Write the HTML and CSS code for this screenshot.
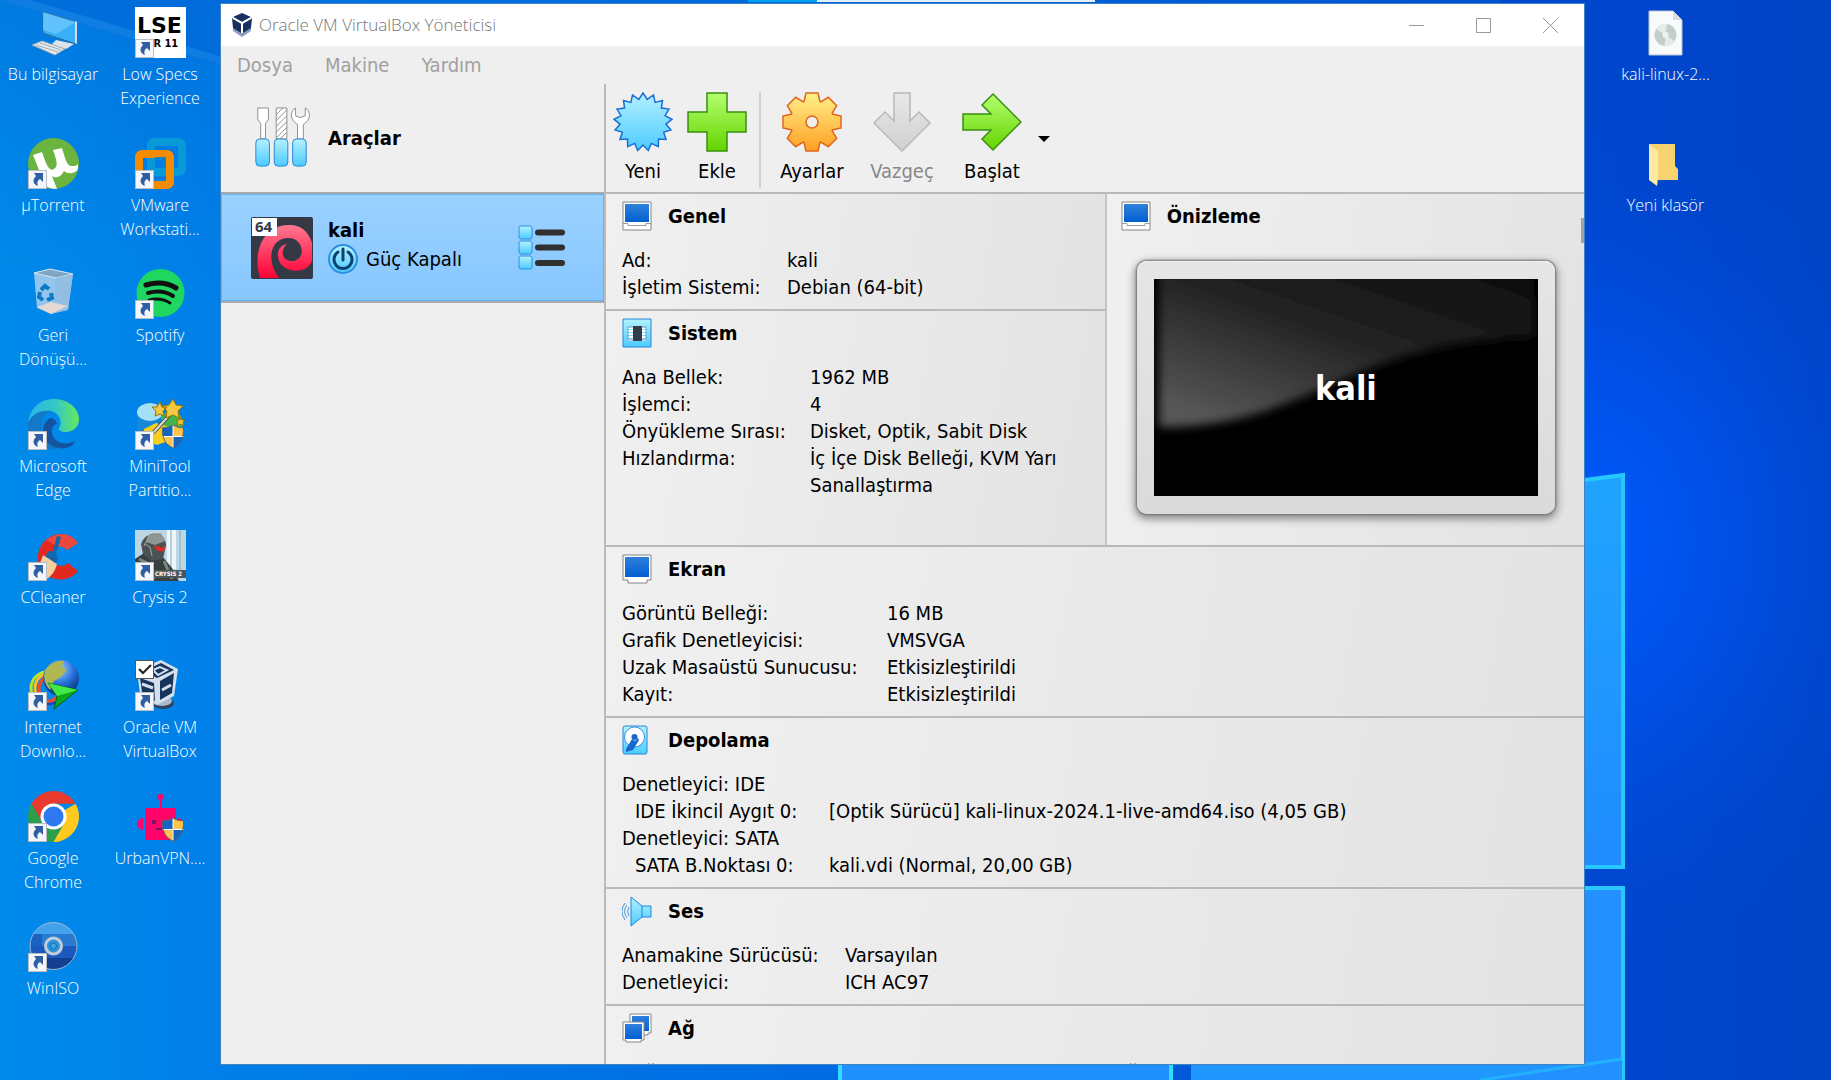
FILE: index.html
```html
<!DOCTYPE html>
<html lang="tr">
<head>
  <meta charset="UTF-8" />
  <meta name="viewport" content="width=device-width, initial-scale=1.0" />
  <title>Oracle VM VirtualBox Yöneticisi</title>
  <link rel="stylesheet" href="styles.css">
</head>
<body>
  <!-- shared gradients and symbols -->
  <svg class="defs" width="0" height="0" aria-hidden="true">
    <defs>
      <linearGradient id="aqua" x1="0" y1="0" x2="0" y2="1"><stop offset="0" stop-color="#b4f1ff"/><stop offset="1" stop-color="#4ccbff"/></linearGradient>
      <linearGradient id="green" x1="0" y1="0" x2="0" y2="1"><stop offset="0" stop-color="#b5ff6e"/><stop offset="1" stop-color="#63d400"/></linearGradient>
      <linearGradient id="orange" x1="0" y1="0" x2="0" y2="1"><stop offset="0" stop-color="#fff08a"/><stop offset="1" stop-color="#ffa024"/></linearGradient>
      <linearGradient id="silver" x1="0" y1="0" x2="0" y2="1"><stop offset="0" stop-color="#e8e8e8"/><stop offset="1" stop-color="#d0d0d0"/></linearGradient>
      <linearGradient id="screen" x1="0" y1="0" x2="0" y2="1"><stop offset="0" stop-color="#3080dc"/><stop offset="1" stop-color="#0060d0"/></linearGradient>
      <linearGradient id="red" x1="0" y1="0" x2="0" y2="1"><stop offset="0" stop-color="#ff7a90"/><stop offset="1" stop-color="#ff0036"/></linearGradient>
      <symbol id="shortcut" viewBox="0 0 19 19">
        <rect x=".5" y=".5" width="18" height="18" fill="#f4f6fa" stroke="#b9bec6"/>
        <path d="M6 3h9v9l-3-3c-3 2-3 4-2 7-5-2-6-6-2-10z" fill="#2f5ea5"/>
      </symbol>
      <symbol id="shield" viewBox="0 0 24 26">
        <path d="M12 1c3 2 7 3 11 3 0 10-2 17-11 21C3 21 1 14 1 4c4 0 8-1 11-3z" fill="#ffc24a"/>
        <path d="M12 1v12H1C1 10 1 7 1 4c4 0 8-1 11-3zM12 13h10c-1 6-4 10-10 12z" fill="#1565c0"/>
        <path d="M12 1v24M1 13h22" stroke="#fff"/>
        <path d="M12 1c3 2 7 3 11 3 0 10-2 17-11 21C3 21 1 14 1 4c4 0 8-1 11-3z" fill="none" stroke="#56606c"/>
      </symbol>
      <symbol id="pc" viewBox="0 0 31 31">
        <path d="M1 1h28v28H1z" fill="#fff" stroke="#858585"/>
        <path d="M3 3h24v18H3z" fill="url(#screen)"/>
        <path d="M1 22.500h5v2h18v-2h5" fill="none" stroke="#999"/>
      </symbol>
    </defs>
  </svg>

  <svg class="wallpaper" viewBox="0 0 1831 1080" preserveAspectRatio="none" aria-hidden="true">
    <defs>
      <linearGradient id="sky"><stop offset="0" stop-color="#008bea"/><stop offset=".12" stop-color="#007fe8"/><stop offset=".4" stop-color="#006fe4"/><stop offset=".84" stop-color="#0047d0"/><stop offset="1" stop-color="#0044c6"/></linearGradient>
      <radialGradient id="glow" cx=".86" cy=".5" r=".4" gradientTransform="translate(.43 0) scale(.5 1)"><stop offset="0" stop-color="#005cff"/><stop offset=".4" stop-color="#0052ee" stop-opacity=".8"/><stop offset="1" stop-color="#0048d0" stop-opacity="0"/></radialGradient>
      <linearGradient id="topdark" x1="0" y1="0" x2="0" y2="1"><stop offset="0" stop-color="#0060d0" stop-opacity=".35"/><stop offset="1" stop-color="#0060d0" stop-opacity="0"/></linearGradient>
      <linearGradient id="pane" x1="0" y1="0" x2="0" y2="1"><stop offset="0" stop-color="#20a4ff"/><stop offset="1" stop-color="#208cff"/></linearGradient>
    </defs>
    <rect width="1831" height="1080" fill="url(#sky)"/>
    <rect width="1831" height="1080" fill="url(#glow)"/>
    <rect width="1500" height="300" fill="url(#topdark)"/>
    <path d="M0 0L240 70V0z" fill="#0062d4" opacity=".5"/>
    <path d="M0 0L240 70V62L30 0z" fill="#2a9cf0" opacity=".35"/>
    <path d="M1400 504L1624 475V867H1400z" fill="url(#pane)"/>
    <path d="M1400 504L1623 475V867H1400" fill="none" stroke="#25c8ff" stroke-width="4"/>
    <path d="M1191 886H1624V1080H1191z" fill="#2291ff"/>
    <path d="M1400 888H1623V1080" fill="none" stroke="#2bc8ff" stroke-width="4"/>
    <path d="M840 1000H1172V1080H840z" fill="#2090ff"/>
    <path d="M1480 1080L1622 1060V1080z" fill="#2291ff"/>
    <path d="M1191 1066H1580L1480 1080H1191z" fill="#2096ff"/>
    <path d="M1480 1080L1622 1059" stroke="#22b0ff" stroke-width="3"/>
    <path d="M840 1000V1080M1171 1000V1080" stroke="#30dcff" stroke-width="4"/>
    <path d="M748 0H817V2H748z" fill="#00a2f0"/>
    <path d="M817 0H1095V2H817z" fill="#e6eef8"/>
  </svg>

  <main class="desktop">
    <nav class="icons icons-left" aria-label="Masaüstü">
      <a class="icon" href="#">
        <svg viewBox="0 0 51 51"><path d="M15 5l33 10v22L15 26z" fill="#38b0f8" stroke="#2f6a94"/><path d="M15 5l33 10-20 12-13-4z" fill="#74cbff" opacity=".7"/><path d="M49 15v22l-2-1V14z" fill="#d8dde2"/><path d="M28 33l18 4-8 5-15-4z" fill="#dce3ea"/><path d="M4 38l10-4 23 8-10 6z" fill="#e5eaee" stroke="#9caab4"/><path d="M8 38l22 7M12 36l21 7" stroke="#9caab4"/></svg>
        <span>Bu bilgisayar</span>
      </a>
      <a class="icon" href="#">
        <svg viewBox="0 0 51 51"><path d="M0 0h51v51H0z" fill="#fff"/><text class="lse" x="2" y="26">LSE</text><text class="lse-sub" x="4" y="40">VER 11</text><use href="#shortcut" y="32" width="19" height="19"/></svg>
        <span>Low Specs Experience</span>
      </a>
      <a class="icon" href="#">
        <svg viewBox="0 0 51 51"><circle cx="25.500" cy="25.500" r="25.500" fill="#6ab43f"/><path d="M5 17l9-3c4 12 7 20 12 17 5-3 2-10-1-19l9-2c3 10 5 18 9 18 3 0 6 0 7-2v5c-2 4-9 6-14 2-3 6-8 8-12 5l5 13c-4 0-9-1-12-4z" fill="#fff"/><use href="#shortcut" y="32" width="19" height="19"/></svg>
        <span>µTorrent</span>
      </a>
      <a class="icon" href="#">
        <svg viewBox="0 0 51 51"><rect x="16" y="4" width="31" height="30" rx="3" fill="none" stroke="#0899d8" stroke-width="8"/><rect x="4" y="16" width="31" height="31" rx="3" fill="none" stroke="#f58b00" stroke-width="8"/><path d="M20 20h10v10" fill="none" stroke="#0b86c4" stroke-width="2"/><use href="#shortcut" y="32" width="19" height="19"/></svg>
        <span>VMware Workstati...</span>
      </a>
      <a class="icon" href="#">
        <svg viewBox="0 0 51 51"><path d="M6 5l16-4 23 5-5 36-17 4-14-6z" fill="#b5d5ee" opacity=".8"/><path d="M6 5l22 5 17-4-23-5z" fill="#7fa6c4" stroke="#d7e7f2"/><path d="M28 10l-3 35 15-3 5-36z" fill="#94bce0" opacity=".8"/><path d="M9 39l14-5 17 4-17 8z" fill="#e5d9d2"/><g fill="none" stroke="#0b79c8" stroke-width="4"><path d="M13 22l4-4 4 3M23 25l1 5-5 2M15 32l-4-3 1-5"/></g></svg>
        <span>Geri Dönüşü...</span>
      </a>
      <a class="icon" href="#">
        <svg viewBox="0 0 51 51"><circle cx="25.500" cy="25" r="24" fill="#1fd760"/><g fill="none" stroke="#111" stroke-linecap="round"><path d="M11 17q17-5 30 3" stroke-width="5"/><path d="M13 25q14-4 25 3" stroke-width="4"/><path d="M14 32q12-3 21 3" stroke-width="3"/></g><use href="#shortcut" y="32" width="19" height="19"/></svg>
        <span>Spotify</span>
      </a>
      <a class="icon" href="#">
        <svg viewBox="0 0 51 51"><defs><linearGradient id="edge"><stop offset="0" stop-color="#28b4e8"/><stop offset=".55" stop-color="#35c9c4"/><stop offset="1" stop-color="#66e85a"/></linearGradient></defs><path d="M0 24C2 8 13 0 26 0c15 0 25 10 25 20 0 8-6 13-13 13-5 0-8-2-7-4 4-5 1-15-8-17C13 11 4 15 0 24z" fill="url(#edge)"/><path d="M0 24c4-9 13-13 23-12-9 3-12 13-8 22 4 8 12 12 20 10-4 4-8 6-13 6C8 49-1 37 0 24z" fill="#1478c8"/><path d="M22 19c-9 5-9 17-2 25 6 6 16 7 23 3 2-1 4-4 4-5-10 5-21 2-23-8-1-4 1-8 5-9-1-4-4-6-7-6z" fill="#14549f"/><use href="#shortcut" y="32" width="19" height="19"/></svg>
        <span>Microsoft Edge</span>
      </a>
      <a class="icon" href="#">
        <svg viewBox="0 0 51 51"><path d="M2 14v20c5 6 18 6 22 0V14z" fill="#1787d9"/><ellipse cx="15" cy="13" rx="13" ry="9" fill="#a6e0f7"/><path d="M26 16q12-7 21 2v10q-11 7-21 0z" fill="#42b649"/><path d="M9 30l12-6 16 5-1 12-14 5-13-5z" fill="#f5cf1b"/><path d="M18 34L39 11" stroke="#4a4a4a" stroke-width="4"/><path d="M18 34L39 11" stroke="#ddd" stroke-width="2"/><path d="M38 0l3 6 7 1-5 5 1 7-6-3-7 3 1-7-5-5 7-1zM25 3l2 5 5 0-4 4 1 5-4-2-5 2 1-5-4-4 5 0zM46 18l1 3h3l-2 2 1 4-3-2-4 2 1-4-2-2h4z" fill="#f4c93f" stroke="#957500"/><use href="#shield" x="26" y="25" width="24" height="25"/><use href="#shortcut" y="32" width="19" height="19"/></svg>
        <span>MiniTool Partitio...</span>
      </a>
      <a class="icon" href="#">
        <svg viewBox="0 0 51 51"><path d="M50 13L39 20C33 13 25 17 25 26c0 9 8 13 15 7l10 8C42 52 25 52 16 43 7 34 8 17 19 9 29 1 43 3 50 13z" fill="#e2291f"/><path d="M50 13L39 20c-3-3-6-4-9-3L18 10C29 1 43 3 50 13z" fill="#f0574b" opacity=".7"/><path d="M29 6l4 1-5 17 2 4-3 9-12-8 6-8h4z" fill="#1467ac"/><path d="M15 25l14 9c-2 8-6 12-10 15L3 42c7-4 10-10 12-17z" fill="#f5cf9f"/><use href="#shortcut" y="32" width="19" height="19"/></svg>
        <span>CCleaner</span>
      </a>
      <a class="icon" href="#">
        <svg viewBox="0 0 51 51"><path d="M0 0h51v51H0z" fill="#bcd6e4"/><path d="M32 0h9v39h-9z" fill="#eef6fa"/><path d="M36 0v40M45 0v44" stroke="#8ba8b8"/><path d="M0 29l12-8 15 5 10 12 7 13H0z" fill="#37403f"/><path d="M6 14C10 2 29-2 31 15l-3 14-12 2-8-7z" fill="#4a5254"/><path d="M13 5l13-2 4 8-10 4-9-3z" fill="#8e9793"/><path d="M19 15l8 3 3-3-1 7-8-2z" fill="#e62822"/><path d="M10 14l5 3 2 9M13 8l-4 8" stroke="#a0a8a6" fill="none"/><path d="M4 29l12 6 3 14M29 31l8 18" stroke="#7d8885" stroke-width="3" fill="none"/><path d="M19 40h32v8H19z" fill="#4c565a"/><text class="crysis" x="20" y="46">CRYSIS 2</text><use href="#shortcut" y="32" width="19" height="19"/></svg>
        <span>Crysis 2</span>
      </a>
      <a class="icon" href="#">
        <svg viewBox="0 0 51 51"><defs><radialGradient id="globe" cx=".45" cy=".25" r=".8"><stop offset="0" stop-color="#9fd0ff"/><stop offset=".5" stop-color="#2773dc"/><stop offset="1" stop-color="#06276a"/></radialGradient></defs><g fill="none" stroke-width="3"><ellipse cx="19" cy="28" rx="16" ry="16" stroke="#b5e534"/><ellipse cx="20" cy="28" rx="13" ry="14" stroke="#ffbf23"/><ellipse cx="21" cy="29" rx="10" ry="12" stroke="#f24c2b"/><path d="M6 37q9 11 22 5" stroke="#2743b5"/></g><circle cx="33" cy="18" r="18" fill="url(#globe)"/><path d="M17 10q7-10 19-9l-2 6 5 3-6 7-7 4-4 9q-8-8-5-20z" fill="#afb851"/><path d="M20 23l30 7-24 19 3-13z" fill="#0aa91d" stroke="#075c11"/><path d="M20 23l30 7-21 6z" fill="#3eea45"/><use href="#shortcut" y="32" width="19" height="19"/></svg>
        <span>Internet Downlo...</span>
      </a>
      <a class="icon" href="#">
        <svg viewBox="0 0 51 51"><ellipse cx="28" cy="43" rx="11" ry="6" fill="#30415f"/><ellipse cx="27" cy="41" rx="10" ry="5" fill="#a9b8cc"/><path d="M2 10L26 0l17 9-4 27-17 9L5 34z" fill="#d4dfef"/><path d="M9 11l17-8 13 7-17 8zM5 18l14 5 1 18L7 32zM25 21l14-8-2 20-12 7z" fill="#17345d"/><path d="M18 10l7-3 7 3-9 5z" fill="none" stroke="#d4dfef" stroke-width="2"/><path d="M7 24l11 4M27 30l9-5" stroke="#d4dfef" stroke-width="3"/><path d="M.5.500h18v18H.500z" fill="#fff" stroke="#555"/><path d="M4 9l4 4 8-8" fill="none" stroke="#222" stroke-width="2"/><use href="#shortcut" y="32" width="19" height="19"/></svg>
        <span>Oracle VM VirtualBox</span>
      </a>
      <a class="icon" href="#">
        <svg viewBox="0 0 51 51"><path d="M25.500 25.500V51A25.500 25.500 0 0 0 47.600 12.800z" fill="#ffc91e"/><path d="M3.400 12.800a25.500 25.500 0 0 1 44.200 0H25.500l-11 19z" fill="#e63b2e"/><path d="M36.500 32L25.500 51A25.500 25.500 0 0 1 3.400 12.800L14.500 32z" fill="#2d9f4c"/><circle cx="25.500" cy="25.500" r="13" fill="#fff"/><circle cx="25.500" cy="25.500" r="10" fill="#2f78f0"/><use href="#shortcut" y="32" width="19" height="19"/></svg>
        <span>Google Chrome</span>
      </a>
      <a class="icon" href="#">
        <svg viewBox="0 0 51 51"><g fill="#ff0469"><rect x="10" y="17" width="31" height="32" rx="1"/><circle cx="25.500" cy="6" r="3"/><path d="M25 7h2v11h-2zM8 27v12c-8-1-8-11 0-12zM43 27v12c7-1 7-11 0-12z"/></g><path d="M17 29h4v4h-4zM31 29h4v3h-4zM21 37h13v2H21z" fill="#7a1467"/><use href="#shield" x="26" y="26" width="24" height="25"/></svg>
        <span>UrbanVPN....</span>
      </a>
      <a class="icon" href="#">
        <svg viewBox="0 0 51 51"><defs><clipPath id="disc"><circle cx="25.500" cy="25" r="23.500"/></clipPath></defs><g clip-path="url(#disc)"><path d="M0 0h51v13H0z" fill="#42a3ec"/><path d="M0 13h51v12H0z" fill="#297bd2"/><path d="M0 25h51v12H0z" fill="#1b59bd"/><path d="M0 37h51v14H0z" fill="#123f91"/><path d="M0 13h14v12H0z" fill="#1b62c0"/></g><circle cx="25.500" cy="25" r="23.500" fill="none" stroke="#9fb7d0"/><circle cx="25.500" cy="25" r="8" fill="#2c93db" stroke="#c3cdd7" stroke-width="3"/><circle cx="25.500" cy="25" r="3" fill="#3ba9eb" stroke="#1a6bb0"/><use href="#shortcut" y="32" width="19" height="19"/></svg>
        <span>WinISO</span>
      </a>
    </nav>

    <section class="window">
      <header class="titlebar">
        <svg class="app-icon" viewBox="0 0 22 24"><path d="M2 14l9 5 9-5v4l-9 6-9-6z" fill="#8d9fc4"/><path d="M11 0l9 4-9 5-9-5zM1 5l9 5v10l-8-5zM21 5l-9 5v10l8-5z" fill="#17305f"/><path d="M2 5l9 5 9-5M11 10v10" fill="none" stroke="#fff" stroke-width="2"/></svg>
        <h1>Oracle VM VirtualBox Yöneticisi</h1>
        <button class="winbtn" aria-label="Küçült"><svg viewBox="0 0 15 15"><path d="M0 7.500h15"/></svg></button>
        <button class="winbtn" aria-label="Ekranı kapla"><svg viewBox="0 0 15 15"><path d="M.5.500h14v14H.500z"/></svg></button>
        <button class="winbtn" aria-label="Kapat"><svg viewBox="0 0 15 15"><path d="M0 0l15 15M15 0L0 15"/></svg></button>
      </header>

      <nav class="menubar">
        <button>Dosya</button>
        <button>Makine</button>
        <button>Yardım</button>
      </nav>

      <div class="content">
        <aside class="machines">
          <button class="machine tools">
            <svg class="machine-icon" viewBox="0 0 62 64">
              <g fill="#fff" stroke="#8c8c8c"><path d="M6 1h11v12l-3 4v16H9V17l-3-4z"/><path d="M25 1h11v32H25z"/><path d="M45 1c-6 3-6 13 2 17v15h6V18c8-4 8-14 2-17v8l-5 2-5-2z"/></g>
              <path d="M25 8l7-7M25 14L36 3M25 20L36 9M25 26l11-11M25 32l11-11M29 33l7-7" stroke="#8c8c8c"/>
              <g fill="url(#aqua)" stroke="#2484dc"><rect x="4" y="33" width="14" height="28" rx="4"/><rect x="23" y="33" width="14" height="28" rx="4"/><rect x="42" y="33" width="14" height="28" rx="4"/></g>
            </svg>
            <strong>Araçlar</strong>
          </button>
          <div class="machine selected">
            <svg class="machine-icon" viewBox="0 0 62 62">
              <rect width="62" height="62" rx="2" fill="#353945"/>
              <path d="M61 26C57 13 48 7 37 8 13 9 1 33 9 61h19C15 44 19 22 36 21c11-1 17 9 14 17-3 8-16 8-18 0-1-5 1-8 4-11-7 1-10 7-9 13 2 16 28 19 34 4z" fill="url(#red)"/>
              <path d="M1 1h25v18H1z" fill="#fff"/>
              <text class="bits" x="4" y="15">64</text>
            </svg>
            <div class="machine-text">
              <strong>kali</strong>
              <span class="state">
                <svg viewBox="0 0 30 30"><circle cx="15" cy="15" r="14" fill="url(#aqua)" stroke="#2f8ee0" stroke-width="2"/><path d="M10 8a9 9 0 1 0 10 0M15 5v11" fill="none" stroke="#0c3f72" stroke-width="3" stroke-linecap="round"/></svg>
                Güç Kapalı
              </span>
            </div>
            <button class="listbtn" aria-label="Makine menüsü">
              <svg viewBox="0 0 48 46"><g fill="url(#aqua)" stroke="#2c8fe4"><rect x="1" y="1" width="13" height="13" rx="2"/><rect x="1" y="16" width="13" height="13" rx="2"/><rect x="1" y="31" width="13" height="13" rx="2"/></g><path d="M20 7.500h24M20 22.500h24M20 38h24" stroke="#303030" stroke-width="6" stroke-linecap="round"/></svg>
            </button>
          </div>
        </aside>

        <div class="main">
          <div class="toolbar">
            <button class="tool"><svg viewBox="0 0 60 60"><path d="M30 1L34.200 7.400 40.500 3 42.100 10.400 49.500 8.600 48.400 16.100 56 17.100 52.100 23.700 58.900 27.300 52.900 32.100 57.900 37.900 50.600 40.300 53.100 47.500 45.500 47 45.300 54.700 38.300 51.400 35.300 58.500 30 53 24.700 58.500 21.700 51.400 14.700 54.700 14.500 47 6.900 47.500 9.400 40.300 2.100 37.900 7.100 32.100 1.100 27.300 7.900 23.700 4 17.100 11.600 16.100 10.500 8.600 17.900 10.400 19.500 3 25.800 7.400z" fill="url(#aqua)" stroke="#1a6fd6" stroke-width="1.500"/></svg>Yeni</button>
            <button class="tool"><svg viewBox="0 0 60 60"><path d="M20 1h20v19h19v20H40v19H20V40H1V20h19z" fill="url(#green)" stroke="#3a8f12" stroke-width="1.500"/></svg>Ekle</button>
            <span class="sep"></span>
            <button class="tool spaced"><svg viewBox="0 0 60 60"><path d="M22 9.500L24 1H36L38 9.500 38.800 9.800 46.300 5.300 54.700 13.700 50.200 21.200 50.500 22 59 24V36L50.500 38 50.200 38.800 54.700 46.300 46.300 54.700 38.800 50.200 38 50.500 36 59H24L22 50.500 21.200 50.200 13.700 54.700 5.300 46.300 9.800 38.800 9.500 38 1 36V24L9.500 22 9.800 21.200 5.300 13.700 13.700 5.300 21.200 9.800z" fill="url(#orange)" stroke="#e2661c" stroke-width="1.500"/><circle cx="30" cy="30" r="6" fill="#efefef" stroke="#e2661c" stroke-width="1.500"/></svg>Ayarlar</button>
            <button class="tool spaced" disabled><svg viewBox="0 0 60 60"><path d="M22 1h16v28l9-9 11 11-28 28L2 31l11-11 9 9z" fill="url(#silver)" stroke="#b8b8b8" stroke-width="1.500"/></svg>Vazgeç</button>
            <button class="tool spaced"><svg viewBox="0 0 60 60"><path d="M1 22h28l-9-9L31 2l28 28-28 28-11-11 9-9H1z" fill="url(#green)" stroke="#3a8f12" stroke-width="1.500"/></svg>Başlat</button>
            <button class="drop" aria-label="Başlatma seçenekleri"><svg viewBox="0 0 12 6"><path d="M0 0h12L6 6z"/></svg></button>
          </div>

          <div class="details">
            <div class="top">
              <div class="top-left">
                <section class="card general">
                  <h2><svg viewBox="0 0 31 31"><use href="#pc" width="31" height="31"/></svg>Genel</h2>
                  <table>
                    <tr><th>Ad:</th><td>kali</td></tr>
                    <tr><th>İşletim Sistemi:</th><td>Debian (64-bit)</td></tr>
                  </table>
                </section>
                <section class="card system">
                  <h2><svg viewBox="0 0 31 31"><path d="M1 1h28v28H1z" fill="url(#aqua)" stroke="#2484dc"/><path d="M6 10h18M6 13h18M6 16h18M6 19h18M6 22h18" stroke="#fff" stroke-width="2"/><path d="M6 9h18v13H6z" fill="none" stroke="#6b9cc0"/><path d="M11 8h9v15h-9z" fill="#333c48"/></svg>Sistem</h2>
                  <table>
                    <tr><th>Ana Bellek:</th><td>1962 MB</td></tr>
                    <tr><th>İşlemci:</th><td>4</td></tr>
                    <tr><th>Önyükleme Sırası:</th><td>Disket, Optik, Sabit Disk</td></tr>
                    <tr><th>Hızlandırma:</th><td>İç İçe Disk Belleği, KVM Yarı Sanallaştırma</td></tr>
                  </table>
                </section>
              </div>
              <section class="card preview">
                <h2><svg viewBox="0 0 31 31"><use href="#pc" width="31" height="31"/></svg>Önizleme</h2>
                <div class="monitor">
                  <div class="monitor-screen">
                    <svg viewBox="0 0 384 217" preserveAspectRatio="none">
                      <defs>
                        <linearGradient id="gloss" x1="1" y1="0" x2=".2" y2="1"><stop offset="0" stop-color="#0c0c0c"/><stop offset=".5" stop-color="#222"/><stop offset="1" stop-color="#565656"/></linearGradient>
                        <filter id="soft"><feGaussianBlur stdDeviation="5"/></filter>
                      </defs>
                      <path d="M5-12V148C160 148 190 62 380 58V-12z" fill="url(#gloss)" filter="url(#soft)"/>
                    </svg>
                    <strong>kali</strong>
                  </div>
                </div>
              </section>
            </div>

            <section class="card display">
              <h2><svg viewBox="0 0 31 31"><path d="M1 1h28v25h-4v3H6v-3H1z" fill="#fff" stroke="#858585"/><path d="M3 3h24v20H3z" fill="url(#screen)"/></svg>Ekran</h2>
              <table>
                <tr><th>Görüntü Belleği:</th><td>16 MB</td></tr>
                <tr><th>Grafik Denetleyicisi:</th><td>VMSVGA</td></tr>
                <tr><th>Uzak Masaüstü Sunucusu:</th><td>Etkisizleştirildi</td></tr>
                <tr><th>Kayıt:</th><td>Etkisizleştirildi</td></tr>
              </table>
            </section>

            <section class="card storage">
              <h2><svg viewBox="0 0 31 31"><rect x="1" y="1" width="24" height="28" rx="2" fill="url(#aqua)" stroke="#2484dc"/><circle cx="12.500" cy="12" r="10" fill="#fff" stroke="#3c93df"/><path d="M10 14l3 2 3-3 1 2-6 10-7 2v-3z" fill="#1668cc"/><circle cx="12.500" cy="12" r="3" fill="#1668cc"/></svg>Depolama</h2>
              <table>
                <tr><th colspan="2">Denetleyici: IDE</th></tr>
                <tr><th class="sub">IDE İkincil Aygıt 0:</th><td>[Optik Sürücü] kali-linux-2024.1-live-amd64.iso (4,05 GB)</td></tr>
                <tr><th colspan="2">Denetleyici: SATA</th></tr>
                <tr><th class="sub">SATA B.Noktası 0:</th><td>kali.vdi (Normal, 20,00 GB)</td></tr>
              </table>
            </section>

            <section class="card audio">
              <h2><svg viewBox="0 0 31 31"><path d="M9 1l11 9h9v11h-9L9 30z" fill="url(#aqua)" stroke="#2484dc"/><path d="M20 10v11" stroke="#2484dc"/><path d="M7 11q-3 4 0 9M5 9q-5 6 0 13M3 7q-6 8 0 17" fill="none" stroke="#4b9ae0"/></svg>Ses</h2>
              <table>
                <tr><th>Anamakine Sürücüsü:</th><td>Varsayılan</td></tr>
                <tr><th>Denetleyici:</th><td>ICH AC97</td></tr>
              </table>
            </section>

            <section class="card network">
              <h2><svg viewBox="0 0 31 31"><path d="M8 1h21v19h-3v2H11v-2H8z" fill="#fff" stroke="#858585"/><path d="M10 3h17v15H10z" fill="url(#screen)"/><path d="M1 9h21v18h-3v2H4v-2H1z" fill="#fff" stroke="#858585"/><path d="M3 11h17v15H3z" fill="url(#screen)"/></svg>Ağ</h2>
              <table>
                <tr><th>Bağdaştırıcı 1:</th><td>Intel PRO/1000 MT Masaüstü (Köprü Bağdaştırıcısı, Realtek RTL8188EE 802.11 bgn)</td></tr>
              </table>
            </section>
            <span class="scroll-thumb"></span>
          </div>
        </div>
      </div>
    </section>

    <nav class="icons icons-right" aria-label="Dosyalar">
      <a class="icon" href="#">
        <svg viewBox="0 0 51 51"><path d="M9 4h24l9 9v35H9z" fill="#f8fafb" stroke="#b7c4d2"/><path d="M33 4v9h9z" fill="#d9dde0"/><circle cx="25.500" cy="28" r="11" fill="#c3cdcb"/><path d="M25.500 28L16 22q4-6 11-5zM25.500 28l9 6q-4 6-10 5z" fill="#e4ebe8"/><circle cx="25.500" cy="28" r="3" fill="#eef2f1"/></svg>
        <span>kali-linux-2...</span>
      </a>
      <a class="icon" href="#">
        <svg viewBox="0 0 51 51"><path d="M9 6h26v22l3 3v11H9z" fill="#f6d36f"/><path d="M9 6l9 7v27l-1 8-8-6z" fill="#ffe8a2"/></svg>
        <span>Yeni klasör</span>
      </a>
    </nav>
  </main>
</body>
</html>
```

FILE: styles.css
```css
* {
  box-sizing: border-box;
}
body {
  margin: 0;
  height: 100vh;
  overflow: hidden;
  font-family: "DejaVu Sans Condensed", "Noto Sans", sans-serif;
  font-size: 20px;
  line-height: 27px;
  color: #000;
  background: #0070e0;
}
button {
  font: inherit;
  color: inherit;
  background: none;
  border: none;
  padding: 0;
  cursor: pointer;
}
svg {
  display: block;
  flex: none;
}
.defs {
  position: absolute;
}
.wallpaper {
  position: absolute;
  inset: 0;
  width: 100%;
  height: 100%;
}
.desktop {
  position: relative;
  display: flex;
  height: 100%;
}

/* desktop icons */
.icons {
  display: grid;
  grid-template-rows: repeat(8, 1fr);
  flex: none;
  padding: 7px 0 28px;
  font-family: "Open Sans", "Noto Sans", sans-serif;
  font-weight: 300;
  font-size: 16px;
  line-height: 24px;
}
.icons-left {
  grid-template-columns: 106px 108px;
  width: 220px;
}
.icons-right {
  grid-template-columns: 107px;
  width: 246px;
  padding-left: 27px;
}
.icon {
  display: flex;
  flex-direction: column;
  align-items: center;
  gap: 4px;
  text-align: center;
  text-decoration: none;
  color: #fff;
}
.icon svg {
  width: 51px;
  height: 51px;
}
.icon span {
  max-width: 100px;
}
.lse {
  font: bold 22px "DejaVu Sans", sans-serif;
}
.lse-sub {
  font: bold 11px "DejaVu Sans Condensed", sans-serif;
}
.crysis {
  font: bold 6px "DejaVu Sans Condensed", sans-serif;
  fill: #fff;
}
.bits {
  font: bold 15px "Noto Sans", sans-serif;
  fill: #353945;
}

/* window */
.window {
  flex: 1;
  min-width: 0;
  display: flex;
  flex-direction: column;
  margin: 3px 0 15px;
  border: 1px solid #3f83c0;
  background: #efefef;
}
.titlebar {
  display: flex;
  align-items: center;
  height: 42px;
  flex: none;
  padding-left: 10px;
  background: #fff;
}
.app-icon {
  width: 22px;
  height: 24px;
}
.titlebar h1 {
  flex: 1;
  margin: 0 0 0 6px;
  font: 300 17px/24px "Open Sans", "Noto Sans", sans-serif;
  color: #777;
}
.winbtn {
  display: flex;
  align-items: center;
  justify-content: center;
  width: 67px;
  height: 42px;
}
.winbtn svg {
  width: 15px;
  height: 15px;
  fill: none;
  stroke: #999;
}
.menubar {
  display: flex;
  gap: 32px;
  flex: none;
  height: 38px;
  padding: 0 16px;
  color: #a0a0a0;
}
.content {
  display: flex;
  flex: 1;
  min-height: 0;
}

/* machine list */
.machines {
  width: 385px;
  flex: none;
  border-right: 2px solid #bbb;
}
.machine {
  display: flex;
  align-items: center;
  width: 100%;
  height: 109px;
  padding: 0 38px 0 30px;
  border-bottom: 2px solid #a9a9a9;
}
.tools {
  height: 110px;
}
.machine-icon {
  width: 62px;
  height: 62px;
  margin-right: 15px;
}
.selected {
  background: linear-gradient(#9bd1ff, #86c7ff);
  box-shadow: inset 0 0 0 1px #60b4fc;
}
.machine-text {
  flex: 1;
  margin-bottom: 4px;
}
.machine-text strong {
  display: block;
}
.state {
  display: flex;
  align-items: center;
  gap: 8px;
}
.state svg {
  width: 30px;
  height: 30px;
}
.listbtn svg {
  width: 48px;
  height: 46px;
}

/* toolbar */
.main {
  flex: 1;
  min-width: 0;
  display: flex;
  flex-direction: column;
}
.toolbar {
  display: flex;
  flex: none;
  height: 108px;
  padding-top: 8px;
}
.tool {
  display: flex;
  flex-direction: column;
  align-items: center;
  gap: 6px;
  width: 74px;
  height: 94px;
}
.tool svg {
  width: 60px;
  height: 60px;
}
.tool:disabled {
  color: #888;
}
.spaced {
  margin-right: 16px;
}
.sep {
  width: 2px;
  height: 96px;
  margin: 0 14px 0 5px;
  background: #d0d0d0;
}
.drop {
  width: 12px;
  height: 94px;
  margin-left: -7px;
}
.drop svg {
  width: 12px;
  height: 6px;
}

/* details */
.details {
  position: relative;
  flex: 1;
  min-height: 0;
  overflow: hidden;
}
.top {
  display: grid;
  grid-template-columns: 51fr 49fr;
  height: 353px;
}
.top-left {
  display: flex;
  flex-direction: column;
}
.card {
  padding: 7px 16px 8px;
  border-top: 2px solid #b9b9b9;
  background: linear-gradient(100deg, #f0f0f0, #e3e3e3);
}
.card h2 {
  display: flex;
  align-items: center;
  gap: 15px;
  height: 30px;
  margin: 0 0 16px;
  font-size: 20px;
}
.card h2 svg {
  width: 31px;
  height: 31px;
}
table {
  width: 100%;
  border-collapse: collapse;
  table-layout: fixed;
}
th,
td {
  padding: 0;
  font-weight: normal;
  text-align: left;
  vertical-align: top;
}
th {
  width: 165px;
  white-space: nowrap;
}
.sub {
  padding-left: 13px;
}
.system {
  flex: 1;
}
.system th {
  width: 188px;
}
.display th {
  width: 265px;
}
.storage table,
.network table {
  table-layout: auto;
}
.storage th {
  width: 207px;
}
.audio th {
  width: 223px;
}
.network th {
  width: 152px;
}
.network td {
  white-space: nowrap;
}
.preview {
  padding-left: 14px;
  border-left: 2px solid #c4c4c4;
}
.monitor {
  height: 253px;
  margin: 30px 13px 0 16px;
  padding: 18px 17px;
  border-radius: 10px;
  background: linear-gradient(#e6e6e6, #dadada);
  box-shadow: 0 0 2px 1px #777, 0 3px 9px 2px #888, inset 0 1px #f4f4f4;
}
.monitor-screen {
  display: grid;
  place-items: center;
  height: 217px;
  overflow: hidden;
  background: #000;
}
.monitor-screen svg,
.monitor-screen strong {
  grid-area: 1 / 1;
}
.monitor-screen svg {
  width: 100%;
  height: 217px;
}
.monitor-screen strong {
  z-index: 1;
  color: #fff;
  font-size: 34px;
  line-height: 40px;
}
.scroll-thumb {
  position: absolute;
  top: 26px;
  right: 0;
  width: 3px;
  height: 25px;
  background: #a2a2a2;
}
```
